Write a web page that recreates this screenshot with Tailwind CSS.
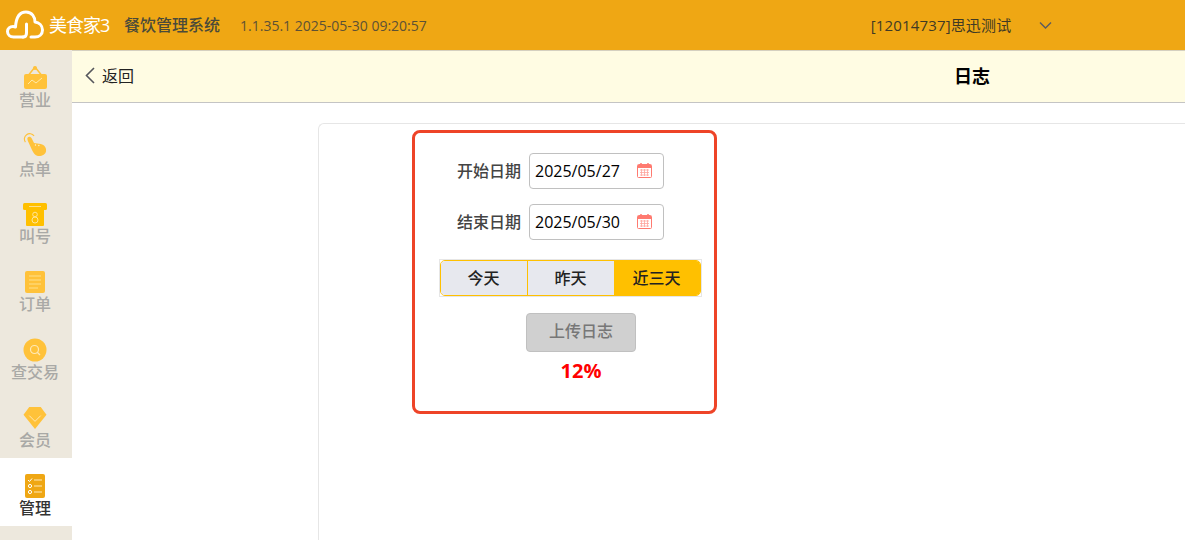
<!DOCTYPE html>
<html lang="zh-CN">
<head>
  <meta charset="UTF-8" />
  <title>日志</title>
  <script src="https://cdn.jsdelivr.net/npm/@tailwindcss/browser@4"></script>
</head>
<body class="w-[1185px] h-[540px] overflow-hidden bg-white font-['Open_Sans','Noto_Sans_CJK_SC',sans-serif]">

  <!-- Top bar -->
  <header class="h-[51px] bg-[#efa714] border-b border-[#d5d0c0] flex items-center">
    <svg class="ml-[6px] w-[38px] h-[30px]" viewBox="0 0 38 30" fill="none" stroke="#fff" stroke-width="3" stroke-linecap="round" stroke-linejoin="round">
      <path d="M17 27H7.5C4 27 1.5 24.5 1.5 21.5C1.5 18.5 4 16.5 7 16.5C8 16.5 9 16.8 9.5 17C10 9 13 2 20 2C26 2 29 7 29 12C33 12.5 36.5 15.5 36.5 20C36.5 24.5 33 27 29 27H25" />
      <path d="M17 27C19 27 20.5 25.5 20.5 23V14" />
    </svg>
    <span class="ml-[5px] w-[62px] text-[18px] leading-none text-white tracking-[-1px] whitespace-nowrap">美食家3</span>
    <span class="ml-[13px] text-[16px] font-medium text-[#4a4a3a]">餐饮管理系统</span>
    <span class="ml-[20px] text-[14px] text-[#5d5135] whitespace-nowrap">1.1.35.1 2025-05-30 09:20:57</span>
    <span class="ml-[444px] text-[15px] tracking-[0.15px] text-[#3f3a25] whitespace-nowrap">[12014737]思迅测试</span>
    <svg class="ml-[28px] w-[13px] h-[9px]" viewBox="0 0 13 9" fill="none" stroke="#5a5a60" stroke-width="1.4">
      <path d="M1 1.5L6.5 7L12 1.5" />
    </svg>
  </header>

  <div class="flex h-[489px]">
    <!-- Side menu -->
    <nav class="w-[72px] h-[490px] -mt-px relative shrink-0 bg-[#ede8dd] text-[16px] font-medium text-[#a9a9a6] leading-[20px]">
      <a class="h-[68px] pr-[2px] flex flex-col items-center pt-[15px]">
        <svg class="w-[24px] h-[24px]" viewBox="0 0 24 24">
          <path d="M12 2L4 12M12 2L20 12" stroke="#ffc23a" stroke-width="1.5" fill="none" />
          <circle cx="12" cy="3" r="2" fill="#ffc23a" />
          <rect x="1" y="9" width="23" height="15" rx="2" fill="#ffc23a" />
          <path d="M5 19L9 15L13 18L19 13" stroke="#ffe9a8" stroke-width="1" fill="none" />
        </svg>
        <span class="mt-[1px]">营业</span>
      </a>
      <a class="h-[68px] pr-[2px] flex flex-col items-center pt-[15px]">
        <svg class="w-[24px] h-[24px]" viewBox="0 0 24 25">
          <path d="M2 9.500A5.500 5.500 0 1 1 11 3" stroke="#ffc23a" stroke-width="1.200" fill="none" />
          <path d="M4 6C4 3.500 7.500 3 8.500 5.500L11 10.500L18 11.500C22 12.500 24 15.500 23.500 19C23 22.500 19 24.500 15 24C12 23.500 10.500 21 9 18L4.500 8Z" fill="#ffc23a" />
          <circle cx="12.500" cy="12.500" r=".7" fill="#fff3d0" />
          <circle cx="16" cy="13" r=".7" fill="#fff3d0" />
        </svg>
        <span class="mt-[2px]">点单</span>
      </a>
      <a class="h-[68px] pr-[2px] flex flex-col items-center pt-[17px]">
        <svg class="w-[24px] h-[23px]" viewBox="0 0 24 23">
          <rect x="0" y="0" width="24" height="7" rx="1.500" fill="#ffc000" />
          <rect x="3" y="3" width="18" height="20" rx="1" fill="#ffc000" />
          <path d="M6 3.500H18" stroke="#ffe08a" stroke-width="1" />
          <circle cx="12" cy="11.500" r="2.300" fill="none" stroke="#ffe59a" stroke-width="1" />
          <circle cx="12" cy="17" r="3" fill="none" stroke="#ffe59a" stroke-width="1" />
        </svg>
        <span>叫号</span>
      </a>
      <a class="h-[68px] pr-[2px] flex flex-col items-center pt-[17px]">
        <svg class="w-[20px] h-[22px]" viewBox="0 0 20 22">
          <rect width="20" height="22" rx="2" fill="#ffc23a" />
          <path d="M4 5H16M4 9H16M4 13H16M4 17H13" stroke="#ffe08a" stroke-width="1.200" />
        </svg>
        <span class="mt-[1px]">订单</span>
      </a>
      <a class="h-[68px] pr-[2px] flex flex-col items-center pt-[16px]">
        <svg class="w-[24px] h-[24px]" viewBox="0 0 24 24">
          <circle cx="12" cy="12" r="11.500" fill="#ffc23a" />
          <circle cx="11.500" cy="11.500" r="4" fill="none" stroke="#ffe9b8" stroke-width="1.200" />
          <path d="M14.500 14.500L17 17" stroke="#ffe9b8" stroke-width="1.200" />
        </svg>
        <span>查交易</span>
      </a>
      <a class="h-[68px] pr-[2px] flex flex-col items-center pt-[17px]">
        <svg class="w-[24px] h-[22px]" viewBox="0 0 24 23">
          <path d="M6 0H18L24 8L12 23L0 8Z" fill="#ffc23a" />
          <path d="M6 9L12 15L18 9" stroke="#ffe9b8" stroke-width="1" fill="none" />
        </svg>
        <span class="mt-[1px]">会员</span>
      </a>
      <a class="h-[68px] pr-[2px] bg-white text-[#333] flex flex-col items-center pt-[16px]">
        <svg class="w-[20px] h-[24px]" viewBox="0 0 20 24">
          <rect width="20" height="24" rx="2" fill="#efa714" />
          <path d="M3 6L4.500 7.500L7 4.500" stroke="#fff" stroke-width="1" fill="none" />
          <circle cx="5" cy="12" r="1.600" fill="none" stroke="#fff" stroke-width="1" />
          <circle cx="5" cy="18" r="1.600" fill="none" stroke="#fff" stroke-width="1" />
          <path d="M9 6H17M9 12H17M9 18H17" stroke="#ffe9b8" stroke-width="1.200" />
        </svg>
        <span>管理</span>
      </a>
    </nav>

    <main class="flex-1 min-w-0">
      <!-- Page title bar -->
      <div class="h-[52px] bg-[#fffce3] border-b border-[#c4c4c4] flex items-center">
        <svg class="ml-[13px] w-[10px] h-[17px] -mt-[2px]" viewBox="0 0 10 17" fill="none" stroke="#55565c" stroke-width="1.600">
          <path d="M9 1L1.500 8.500L9 16" />
        </svg>
        <span class="ml-[7px] mb-[2px] text-[16px] text-[#222]">返回</span>
        <span class="ml-[820px] text-[18px] font-bold text-black">日志</span>
      </div>

      <!-- Card -->
      <div class="ml-[246px] mt-[20px] h-[420px] border-l border-t border-[#e6e6e6] rounded-tl-[6px]">
        <div class="ml-[93px] mt-[6px] w-[305px] h-[284px] border-[3.500px] border-[#ee4428] rounded-[8px] bg-white flex flex-col">
          <div class="ml-[23px] mt-[20px] flex items-center h-[36px]">
            <span class="w-[83px] text-right text-[16px] font-medium text-[#444]">开始日期</span>
            <div class="ml-[8px] w-[135px] h-[36px] border border-[#c0c0c0] rounded-[4px] flex items-center pl-[5px]">
              <span class="w-[102px] text-[16px] text-black">2025/05/27</span>
              <svg class="w-[15px] h-[16px] -mt-[2px]" viewBox="0 0 15 16">
                <rect x=".5" y="2.500" width="14" height="13" rx="1" fill="#fff" stroke="#ff7a70" />
                <path d="M1 3H14V6H1Z" fill="#ff7a70" />
                <path d="M4 1V4M11 1V4" stroke="#ff7a70" stroke-width="1.500" />
                <path d="M3 8H12M3 10.500H12M3 13H12M4.500 7V14M7.500 7V14M10.500 7V14" stroke="#ffa39c" stroke-width=".8" />
              </svg>
            </div>
          </div>
          <div class="ml-[23px] mt-[15px] flex items-center h-[36px]">
            <span class="w-[83px] text-right text-[16px] font-medium text-[#444]">结束日期</span>
            <div class="ml-[8px] w-[135px] h-[36px] border border-[#c0c0c0] rounded-[4px] flex items-center pl-[5px]">
              <span class="w-[102px] text-[16px] text-black">2025/05/30</span>
              <svg class="w-[15px] h-[16px] -mt-[2px]" viewBox="0 0 15 16">
                <rect x=".5" y="2.500" width="14" height="13" rx="1" fill="#fff" stroke="#ff7a70" />
                <path d="M1 3H14V6H1Z" fill="#ff7a70" />
                <path d="M4 1V4M11 1V4" stroke="#ff7a70" stroke-width="1.500" />
                <path d="M3 8H12M3 10.500H12M3 13H12M4.500 7V14M7.500 7V14M10.500 7V14" stroke="#ffa39c" stroke-width=".8" />
              </svg>
            </div>
          </div>

          <!-- Range buttons -->
          <div class="ml-[23.500px] mt-[19px] w-[263px] h-[38px] border border-[#e6e6e6]">
            <div class="h-full flex text-[16px] font-medium text-[#222] border border-[#ffc000] rounded-[5px] overflow-hidden">
              <span class="w-[87px] bg-[#e7e8ee] border-r border-[#ffc000] flex items-center justify-center">今天</span>
              <span class="w-[86px] bg-[#e7e8ee] flex items-center justify-center">昨天</span>
              <span class="flex-1 bg-[#ffc000] flex items-center justify-center">近三天</span>
            </div>
          </div>

          <div class="ml-[111px] mt-[16px] w-[110px] h-[39px] pb-[3px] bg-[#d0d0d0] border border-[#c0c0c0] rounded-[4px] text-[16px] font-medium text-[#777] flex items-center justify-center">上传日志</div>
          <div class="ml-[111px] mt-[5px] w-[110px] text-center text-[20px] leading-[27px] font-bold text-[#ff0000]">12%</div>
        </div>
      </div>
    </main>
  </div>
</body>
</html>
